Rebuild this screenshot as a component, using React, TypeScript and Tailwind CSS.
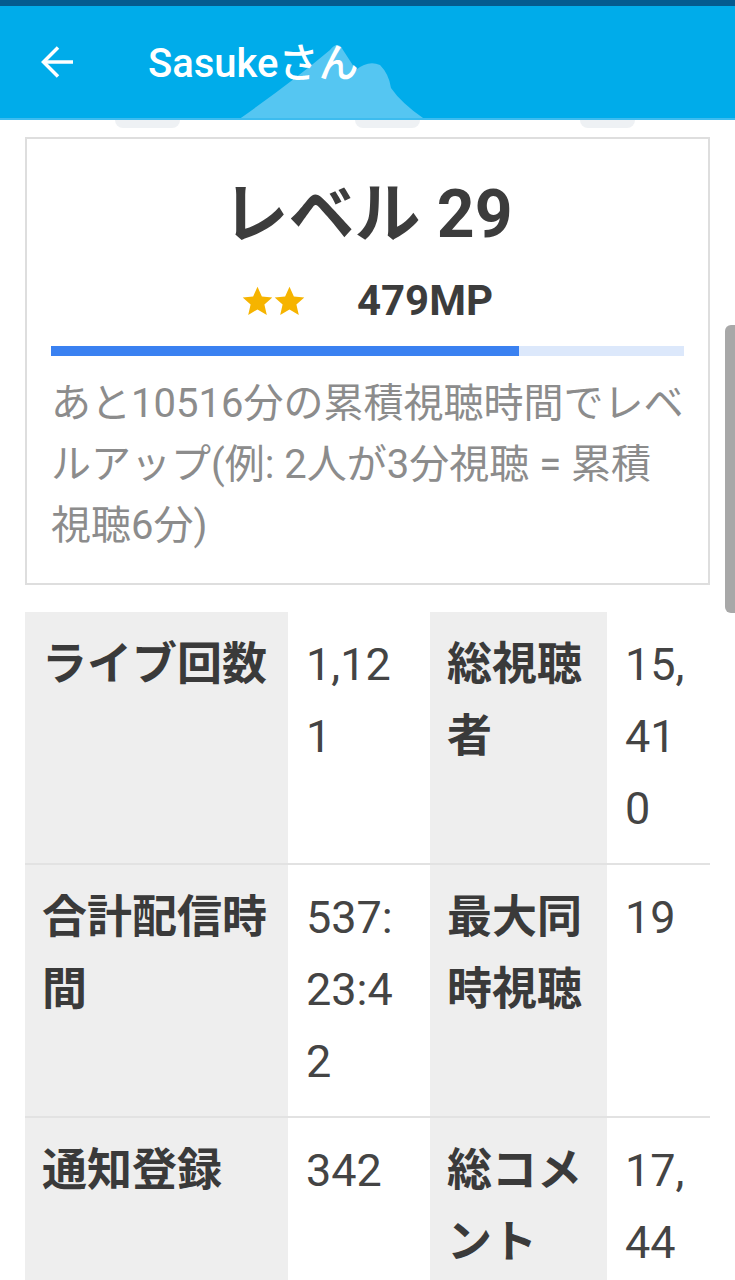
import React from 'react';

const font = "font-['Roboto','Noto_Sans_CJK_JP',sans-serif]";

type Stat = { label: string; value: string };

const rows: [Stat, Stat][] = [
  [
    { label: 'ライブ回数', value: '1,121' },
    { label: '総視聴者', value: '15,410' },
  ],
  [
    { label: '合計配信時間', value: '537:23:42' },
    { label: '最大同時視聴', value: '19' },
  ],
  [
    { label: '通知登録', value: '342' },
    { label: '総コメント', value: '17,445' },
  ],
];

function Star() {
  return (
    <svg width="31" height="29" viewBox="1 1 22 20.5" fill="#f6b400">
      <path d="M12 1.5l3.1 6.9 7.4.7-5.6 5 1.7 7.4L12 17.6l-6.6 3.9 1.7-7.4-5.6-5 7.4-.7z" />
    </svg>
  );
}

export default function App() {
  // progress toward next level
  const progress = 0.739;

  return (
    <div className={`${font} relative h-[1280px] w-full overflow-hidden bg-white`}>
      {/* status strip */}
      <div className="h-[6px] bg-[#045b8f]" />

      {/* header */}
      <div className="relative flex h-[114px] items-center overflow-hidden border-b-2 border-[#3dbcef] bg-[#00acea] pl-[41px]">
        <svg
          className="absolute left-[230px] top-[24px]"
          width="200"
          height="90"
          viewBox="0 0 200 90"
          fill="#55c6f2"
        >
          <path d="M8 90 Q62 52 100 20 Q108 10 113 20 L126 40 Q138 30 150 35 Q159 44 161 58 Q172 74 196 90 Z" />
        </svg>
        <svg width="32" height="32" viewBox="0 0 32 32" fill="none" stroke="white" strokeWidth="3.5" className="relative mt-[-1px]">
          <path d="M3 16 H32" />
          <path d="M17 1.5 L2.5 16 L17 30.5" />
        </svg>
        <h1 className="relative ml-[75px] mt-[3px] text-[40px] font-medium leading-none text-white">Sasukeさん</h1>
      </div>

      {/* faint tabs peeking below header */}
      <div className="flex h-[17px] pl-[115px]">
        <div className="h-[8px] w-[65px] rounded-b-lg bg-[#eef1f4]" />
        <div className="ml-[175px] h-[8px] w-[65px] rounded-b-lg bg-[#eef1f4]" />
        <div className="ml-[160px] h-[8px] w-[55px] rounded-b-lg bg-[#eef1f4]" />
      </div>

      <div className="px-[25px]">
        {/* level card */}
        <div className="border-2 border-[#dedede] px-[24px] pb-[27px] pt-[36px]">
          <div className="text-center text-[66px] font-bold leading-[1.2] text-[#3c3c3c]">レベル 29</div>
          <div className="mt-[21px] flex h-[50px] items-center justify-center">
            <div className="flex gap-[1px]">
              <Star />
              <Star />
            </div>
            <div className="ml-[52px] text-[42px] font-bold text-[#3c3c3c]">479MP</div>
          </div>
          <div className="mt-[21px] h-[10px] bg-[#dce8fb]">
            <div className="h-full bg-[#3a81f1]" style={{ width: `${progress * 100}%` }} />
          </div>
          <p className="mr-[-4px] mt-[17px] text-[40px] leading-[61px] text-[#8c8c8c]">
            あと10516分の累積視聴時間でレベルアップ(例: 2人が3分視聴 = 累積視聴6分)
          </p>
        </div>

        {/* stats table */}
        <div className="mt-[27px]">
          {rows.map((row, i) => (
            <div
              key={i}
              className={`grid grid-cols-[263px_142px_177px_103px] ${i > 0 ? 'border-t-2 border-[#e2e2e2]' : ''}`}
            >
              {row.map((s, j) => (
                <React.Fragment key={j}>
                  <div className="break-all bg-[#eeeeee] pb-[18px] pl-[17px] pr-[17px] pt-[17px] text-[45px] font-bold leading-[72px] text-[#3a3a3a]">
                    {s.label}
                  </div>
                  <div className="break-all px-[18px] pb-[18px] pt-[17px] text-[45px] leading-[72px] text-[#444444]">
                    {s.value}
                  </div>
                </React.Fragment>
              ))}
            </div>
          ))}
        </div>
      </div>

      {/* overlay scrollbar */}
      <div className="absolute right-0 top-[325px] h-[288px] w-[10px] rounded-l-md bg-[#a8a8a8]" />
    </div>
  );
}
